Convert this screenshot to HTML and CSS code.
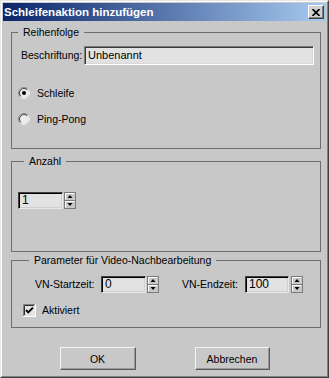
FILE: index.html
```html
<!DOCTYPE html>
<html lang="de">
<head>
  <meta charset="UTF-8">
  <title>Schleifenaktion hinzufügen</title>
  <link rel="stylesheet" href="styles.css">
</head>
<body>
  <div class="window">
    <div class="frame">
      <div class="titlebar">
        <span class="title">Schleifenaktion hinzufügen</span>
        <span class="close-btn">
          <svg width="8" height="7" viewBox="0 0 8 7"><path d="M0.5 0 L7.5 7 M7.5 0 L0.5 7" stroke="#000" stroke-width="1.6"/></svg>
        </span>
      </div>

      <!-- Reihenfolge -->
      <fieldset class="group group-order">
        <legend>Reihenfolge</legend>
        <div class="field-row">
          <label>Beschriftung:</label>
          <span class="textbox wide">Unbenannt</span>
        </div>
        <div class="option first">
          <svg width="12" height="12" viewBox="0 0 12 12">
            <circle cx="6" cy="6" r="5.5" fill="#ececec" stroke="#8a8a8a"/>
            <path d="M2.8 9.2 A4.5 4.5 0 0 1 9.2 2.8" fill="none" stroke="#404040"/>
            <path d="M9.9 2.1 A5.5 5.5 0 0 1 2.1 9.9" fill="none" stroke="#fff"/>
            <circle cx="6" cy="6" r="2" fill="#000"/>
          </svg>
          <span>Schleife</span>
        </div>
        <div class="option">
          <svg width="12" height="12" viewBox="0 0 12 12">
            <circle cx="6" cy="6" r="5.5" fill="#ececec" stroke="#8a8a8a"/>
            <path d="M2.8 9.2 A4.5 4.5 0 0 1 9.2 2.8" fill="none" stroke="#404040"/>
            <path d="M9.9 2.1 A5.5 5.5 0 0 1 2.1 9.9" fill="none" stroke="#fff"/>
          </svg>
          <span>Ping-Pong</span>
        </div>
      </fieldset>

      <!-- Anzahl -->
      <fieldset class="group group-count">
        <legend>Anzahl</legend>
        <div class="spin">
          <span class="spin-box">1</span>
          <svg class="spin-arrows" width="12" height="17" viewBox="0 0 12 17">
            <rect x="0.5" y="0.5" width="11" height="16" fill="#c8c8c8" stroke="#7a7a7a"/>
            <path d="M1.5 7.5 V1.5 H10.5 M1.5 15.5 V9.5 H10.5" fill="none" stroke="#fff"/>
            <line x1="1" y1="8.5" x2="11" y2="8.5" stroke="#7a7a7a"/>
            <path d="M6 3 L8.5 6 H3.5 Z M3.5 11 H8.5 L6 14 Z" fill="#000"/>
          </svg>
        </div>
      </fieldset>

      <!-- Video-Nachbearbeitung -->
      <fieldset class="group group-video">
        <legend>Parameter für Video-Nachbearbeitung</legend>
        <div class="vn-row">
          <label class="vn-start">VN-Startzeit:</label>
          <div class="spin">
            <span class="spin-box">0</span>
            <svg class="spin-arrows" width="12" height="17" viewBox="0 0 12 17">
              <rect x="0.5" y="0.5" width="11" height="16" fill="#c8c8c8" stroke="#7a7a7a"/>
              <path d="M1.5 7.5 V1.5 H10.5 M1.5 15.5 V9.5 H10.5" fill="none" stroke="#fff"/>
              <line x1="1" y1="8.5" x2="11" y2="8.5" stroke="#7a7a7a"/>
              <path d="M6 3 L8.5 6 H3.5 Z M3.5 11 H8.5 L6 14 Z" fill="#000"/>
            </svg>
          </div>
          <label class="vn-end">VN-Endzeit:</label>
          <div class="spin">
            <span class="spin-box">100</span>
            <svg class="spin-arrows" width="12" height="17" viewBox="0 0 12 17">
              <rect x="0.5" y="0.5" width="11" height="16" fill="#c8c8c8" stroke="#7a7a7a"/>
              <path d="M1.5 7.5 V1.5 H10.5 M1.5 15.5 V9.5 H10.5" fill="none" stroke="#fff"/>
              <line x1="1" y1="8.5" x2="11" y2="8.5" stroke="#7a7a7a"/>
              <path d="M6 3 L8.5 6 H3.5 Z M3.5 11 H8.5 L6 14 Z" fill="#000"/>
            </svg>
          </div>
        </div>
        <div class="check-row">
          <svg width="13" height="13" viewBox="0 0 13 13">
            <rect x="0" y="0" width="13" height="13" fill="#e4e4e4"/>
            <path d="M0.5 12 V0.5 H12" fill="none" stroke="#808080"/>
            <path d="M1.5 11 V1.5 H11" fill="none" stroke="#303030"/>
            <path d="M0 12.5 H12.5 V0" fill="none" stroke="#fff"/>
            <path d="M3 6 L5.2 8.4 L10 3.6" fill="none" stroke="#000" stroke-width="2"/>
          </svg>
          <span>Aktiviert</span>
        </div>
      </fieldset>

      <div class="buttons">
        <button class="btn btn-ok">OK</button>
        <button class="btn btn-cancel">Abbrechen</button>
      </div>
    </div>
  </div>
</body>
</html>
```

FILE: styles.css
```css
body {
  margin: 0;
  background-color: #c8c8c8;
}
.window {
  width: 329px;
  height: 378px;
  box-sizing: border-box;
  border: 1px solid;
  border-color: #e6e6e6 #404040 #404040 #e6e6e6;
  background-color: #c8c8c8;
  color: #000;
  font-family: "Liberation Sans", Arial, sans-serif;
  font-size: 10.5px;
  line-height: 13px;
}
.frame {
  height: 100%;
  box-sizing: border-box;
  border: 1px solid;
  border-color: #fff #808080 #808080 #fff;
  padding: 1px;
  display: flex;
  flex-direction: column;
}
.titlebar {
  height: 18px;
  flex: none;
  display: flex;
  align-items: center;
  justify-content: space-between;
  padding: 0 2px 0 1px;
  background: linear-gradient(90deg, #0a246a, #a6caf0);
}
.title {
  color: #fff;
  font-weight: bold;
  font-size: 11.5px;
}
.close-btn {
  width: 16px;
  height: 14px;
  box-sizing: border-box;
  border: 1px solid;
  border-color: #fff #404040 #404040 #fff;
  box-shadow: inset -1px -1px #808080;
  background-color: #d0d0d0;
  display: flex;
  align-items: center;
  justify-content: center;
}

/* group boxes */
.group {
  border: 1px solid #6e6e6e;
  margin: 0 5px 0 8px;
  padding: 0;
  min-width: 0;
}
.group legend {
  padding: 0 5px;
  margin-left: 6px;
  line-height: 13px;
}
.group-order {
  margin-top: 5px;
  padding-bottom: 22px;
}
.group-count {
  margin-top: 6px;
  padding: 24px 0 42px 6px;
}
.group-video {
  margin-top: 2px;
  padding: 9px 0 10px 11px;
}

.field-row {
  display: flex;
  align-items: center;
  height: 19px;
  margin-top: 7px;
  padding: 0 6px 0 9px;
}
.textbox {
  box-sizing: border-box;
  border: 1px solid;
  border-color: #7c7c7c #fff #fff #7c7c7c;
  box-shadow: inset 1px 1px #383838, inset -1px -1px #d8d8d8;
  background-color: #e2e2e2;
}
.textbox.wide {
  margin-left: auto;
  width: 230px;
  height: 19px;
  padding: 2px 0 0 3px;
  font-size: 11px;
}

.option {
  display: flex;
  align-items: center;
  height: 14px;
  margin: 12px 0 0 6px;
}
.option.first {
  margin-top: 21px;
}
.option span {
  margin-left: 7px;
}

.spin {
  display: flex;
  align-items: center;
  gap: 1px;
}
.spin-box {
  width: 45px;
  height: 17px;
  box-sizing: border-box;
  border: 1px solid;
  border-color: #404040 #e8e8e8 #e8e8e8 #404040;
  box-shadow: inset 1px 1px #000, inset -1px -1px #d0d0d0;
  background-color: #e2e2e2;
  padding: 1px 0 0 3px;
  font-size: 12px;
}
.spin-arrows {
  display: block;
}

.vn-row {
  display: flex;
  align-items: center;
  height: 17px;
  margin-left: 12px;
}
.vn-start {
  width: 66px;
}
.vn-end {
  width: 63px;
  margin-left: 23px;
}
.vn-end + .spin {
  gap: 2px;
}
.vn-end + .spin .spin-box {
  width: 44px;
}

.check-row {
  display: flex;
  align-items: center;
  height: 13px;
  margin-top: 11px;
}
.check-row svg {
  display: block;
}
.check-row span {
  margin-left: 6px;
}

.buttons {
  display: flex;
  justify-content: center;
  gap: 59px;
  margin-top: 19px;
}
.btn {
  width: 76px;
  height: 23px;
  box-sizing: border-box;
  border: 1px solid;
  border-color: #f4f4f4 #5a5a5a #5a5a5a #f4f4f4;
  box-shadow: inset -1px -1px #9a9a9a;
  background-color: #c8c8c8;
  font-family: "Liberation Sans", Arial, sans-serif;
  font-size: 10.5px;
  color: #000;
  padding: 0;
}
.btn-cancel {
  width: 75px;
}
```
